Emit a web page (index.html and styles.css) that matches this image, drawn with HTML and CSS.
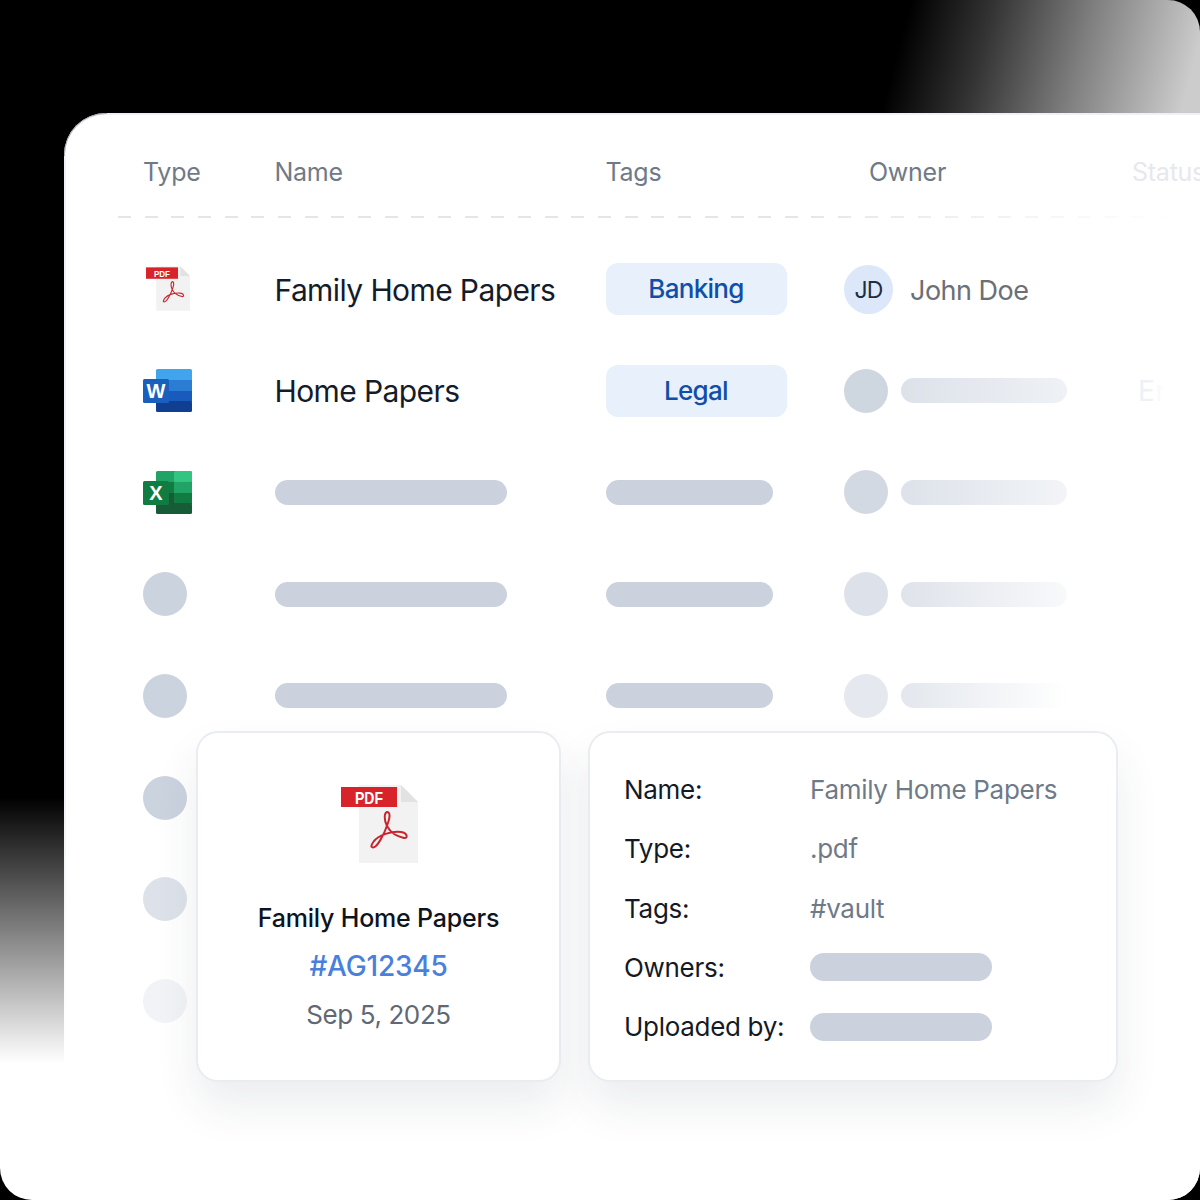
FILE: index.html
```html
<!DOCTYPE html>
<html lang="en">
<head>
<meta charset="utf-8">
<title>Documents</title>
<link rel="stylesheet" href="styles.css">
</head>
<body>
<main class="frame">
  <section class="panel">
    <div class="row head">
      <div>Type</div>
      <div>Name</div>
      <div>Tags</div>
      <div class="head-owner">Owner</div>
      <div class="head-status">Status</div>
    </div>
    <div class="dashes"></div>

    <div class="rows">
      <div class="row row-first">
        <div class="type">
          <svg class="icon-pdf-sm" viewBox="0 0 77 78">
            <path d="M18 0H60L77 17V78H18Z" fill="#f2f2f2"/>
            <path d="M60 0L77 17H60Z" fill="#e2e2e2"/>
            <rect x="0" y="2" width="56" height="20" fill="#d9232b"/>
            <text x="14" y="19" class="pdf-label" textLength="28" lengthAdjust="spacingAndGlyphs">PDF</text>
            <path d="M31 62C35 65 43 50 47 38C50 29 48 27 46 27C43 28 43 35 46 41C50 49 56 51 63 53C67 54 67 48 60 47C50 46 38 50 33 56C30 60 30 62 31 62Z" fill="none" stroke="#c9252d" stroke-width="2"/>
          </svg>
        </div>
        <div class="name">Family Home Papers</div>
        <div><span class="tag">Banking</span></div>
        <div class="owner">
          <span class="initials">JD</span>
          <span class="owner-name">John Doe</span>
        </div>
      </div>

      <div class="row">
        <div class="type">
          <svg class="icon-office" viewBox="0 0 49 43">
            <rect x="13" width="36" height="12" rx="1.5" fill="#41a5ee"/>
            <rect x="13" y="11" width="36" height="11" fill="#2b7cd3"/>
            <rect x="13" y="22" width="36" height="11" fill="#185abd"/>
            <rect x="13" y="32" width="36" height="11" rx="1.5" fill="#103f91"/>
            <rect y="10" width="26" height="24" rx="1.5" fill="#1a5fbe"/>
            <text x="13" y="29" class="office-label" text-anchor="middle">W</text>
          </svg>
        </div>
        <div class="name">Home Papers</div>
        <div><span class="tag">Legal</span></div>
        <div class="owner">
          <span class="dot dot-a"></span>
          <span class="line line-a"></span>
        </div>
        <div class="status">En</div>
      </div>

      <div class="row">
        <div class="type">
          <svg class="icon-office" viewBox="0 0 49 43">
            <rect x="13" width="36" height="12" rx="1.5" fill="#21a366"/>
            <rect x="31" width="18" height="11" rx="1.5" fill="#33c481"/>
            <rect x="13" y="11" width="18" height="11" fill="#107c41"/>
            <rect x="31" y="11" width="18" height="11" fill="#21a366"/>
            <rect x="13" y="22" width="18" height="11" fill="#185c37"/>
            <rect x="31" y="22" width="18" height="11" fill="#107c41"/>
            <rect x="13" y="32" width="36" height="11" rx="1.5" fill="#185c37"/>
            <rect y="10" width="26" height="24" rx="1.5" fill="#107c41"/>
            <text x="13" y="29" class="office-label" text-anchor="middle">X</text>
          </svg>
        </div>
        <div><span class="bar bar-name"></span></div>
        <div><span class="bar bar-tag"></span></div>
        <div class="owner">
          <span class="dot dot-b"></span>
          <span class="line line-b"></span>
        </div>
      </div>

      <div class="row">
        <div class="type"><span class="dot"></span></div>
        <div><span class="bar bar-name"></span></div>
        <div><span class="bar bar-tag"></span></div>
        <div class="owner">
          <span class="dot dot-c"></span>
          <span class="line line-c"></span>
        </div>
      </div>

      <div class="row">
        <div class="type"><span class="dot"></span></div>
        <div><span class="bar bar-name"></span></div>
        <div><span class="bar bar-tag"></span></div>
        <div class="owner">
          <span class="dot dot-d"></span>
          <span class="line line-d"></span>
        </div>
      </div>

      <div class="row"><div class="type"><span class="dot"></span></div></div>
      <div class="row"><div class="type"><span class="dot dot-c"></span></div></div>
      <div class="row"><div class="type"><span class="dot dot-e"></span></div></div>
    </div>

    <div class="cards">
      <article class="card card-file">
        <svg class="icon-pdf-lg" viewBox="0 0 77 78">
          <path d="M18 0H60L77 17V78H18Z" fill="#f2f2f2"/>
          <path d="M60 0L77 17H60Z" fill="#e2e2e2"/>
          <rect x="0" y="2" width="56" height="20" fill="#d9232b"/>
          <text x="14" y="19" class="pdf-label" textLength="28" lengthAdjust="spacingAndGlyphs">PDF</text>
          <path d="M31 62C35 65 43 50 47 38C50 29 48 27 46 27C43 28 43 35 46 41C50 49 56 51 63 53C67 54 67 48 60 47C50 46 38 50 33 56C30 60 30 62 31 62Z" fill="none" stroke="#c9252d" stroke-width="2"/>
        </svg>
        <h2 class="file-name">Family Home Papers</h2>
        <p class="file-id">#AG12345</p>
        <p class="file-date">Sep 5, 2025</p>
      </article>
      <article class="card card-meta">
        <div class="meta-label">Name:</div><div class="meta-value">Family Home Papers</div>
        <div class="meta-label">Type:</div><div class="meta-value">.pdf</div>
        <div class="meta-label">Tags:</div><div class="meta-value">#vault</div>
        <div class="meta-label">Owners:</div><div class="meta-bar"></div>
        <div class="meta-label">Uploaded by:</div><div class="meta-bar"></div>
      </article>
    </div>
  </section>
</main>
</body>
</html>
```

FILE: styles.css
```css
* { box-sizing: border-box; }

html, body {
  margin: 0;
  height: 100%;
  background: #000;
}

body {
  font-family: "Inter", "Liberation Sans", sans-serif;
  overflow: hidden;
}

.pdf-label {
  font: 700 17px "Liberation Sans", sans-serif;
  fill: #fff;
}

.office-label {
  font: 700 20px "Liberation Sans", sans-serif;
  fill: #fff;
}

.frame {
  width: 1200px;
  height: 1200px;
  border-radius: 32px;
  overflow: hidden;
  padding: 113px 0 0 64px;
  background:
    linear-gradient(105deg, rgba(255,255,255,0) 880px, rgba(255,255,255,.2) 960px, rgba(255,255,255,.5) 1060px, rgba(255,255,255,.8) 1170px),
    linear-gradient(180deg, #000 797px, #fff 1063px);
}

.panel {
  position: relative;
  height: 100%;
  background: #fff;
  border-top-left-radius: 42px;
  border-top: 2px solid #eef1f6;
  border-left: 2px solid transparent;
  padding: 0 0 0 77px;
}

.panel::before {
  content: "";
  position: absolute;
  left: -2px;
  top: 40px;
  bottom: 0;
  width: 2px;
  background: linear-gradient(180deg, #eef2f8, #eef2f8 60%, #fff 85%);
}

.panel::after {
  content: "";
  position: absolute;
  left: -2px;
  top: -2px;
  width: 42px;
  height: 42px;
  border-top: 1.5px solid #a9adb3;
  border-left: 1.5px solid #a9adb3;
  border-top-left-radius: 42px;
}

.row {
  display: grid;
  grid-template-columns: 131.5px 331px 238.5px 288px 100px;
  align-items: center;
  height: 101.75px;
}

.head {
  height: 101px;
  font-size: 25px;
  letter-spacing: -.25px;
  color: #6f7a89;
  align-items: start;
  padding-top: 41px;
  line-height: 32px;
}

.head-owner { padding-left: 25px; }
.head-status { color: #e6e8ec; }

.dashes {
  height: 2px;
  margin-left: -25px;
  margin-right: 20px;
  background: repeating-linear-gradient(90deg, #e3e6eb 0 13px, transparent 13px 26.67px);
  -webkit-mask-image: linear-gradient(90deg, #000 65%, transparent 100%);
  mask-image: linear-gradient(90deg, #000 65%, transparent 100%);
}

.rows { padding-top: 20px; }

.type { display: flex; align-items: center; }

.icon-pdf-sm { width: 44px; height: 45px; margin-left: 3px; }
.icon-office { width: 49px; height: 43px; }
.icon-pdf-lg { width: 77px; height: 78px; margin-left: 1px; }

.name {
  font-size: 30px;
  letter-spacing: -.6px;
  color: #141c2b;
}

.row-first .name { padding-top: 2px; }
.row-first .owner { padding-top: 2px; }
.row-first .owner-name { padding-top: 2px; }

.tag {
  display: flex;
  align-items: center;
  justify-content: center;
  width: 181px;
  height: 52px;
  border-radius: 12px;
  background: #e8f0fc;
  color: #0f4fa8;
  font-size: 26px;
  letter-spacing: -.7px;
  font-weight: 500;
}

.owner {
  display: flex;
  align-items: center;
  gap: 13px;
}

.initials {
  display: flex;
  align-items: center;
  justify-content: center;
  width: 49px;
  height: 49px;
  border-radius: 50%;
  background: #dce8f9;
  color: #1f2d44;
  font-size: 23px;
  letter-spacing: -.8px;
}

.owner-name {
  margin-left: 4px;
  font-size: 27px;
  letter-spacing: -.5px;
  color: #6b6f76;
}

.status {
  padding-left: 6px;
  font-size: 29px;
  color: #eef0f3;
  -webkit-mask-image: linear-gradient(90deg, #000 16px, transparent 34px);
  mask-image: linear-gradient(90deg, #000 16px, transparent 34px);
}

.dot {
  display: block;
  flex: none;
  width: 44px;
  height: 44px;
  border-radius: 50%;
  background: #cbd3df;
}

.dot-a { background: #ced6e0; }
.dot-b { background: #d3d9e3; }
.dot-c { background: #dde2ea; }
.dot-d { background: #e5e8ee; }
.dot-e { background: #f1f3f6; }

.bar {
  display: block;
  height: 25px;
  border-radius: 13px;
  background: #cbd2de;
}

.bar-name { width: 232px; }
.bar-tag { width: 167px; }

.line {
  display: block;
  width: 166px;
  height: 25px;
  border-radius: 13px;
}

.line-a { background: linear-gradient(90deg, #dde2ea, #eef1f5); }
.line-b { background: linear-gradient(90deg, #dde2ea, #f2f4f7); }
.line-c { background: linear-gradient(90deg, #dfe3ea, #f8f9fb); }
.line-d { background: linear-gradient(90deg, #e3e7ed, #fff); }

.cards {
  position: absolute;
  left: 130px;
  top: 616px;
  display: flex;
  gap: 27px;
}

.card {
  height: 351px;
  background: #fff;
  border: 2px solid #e9ecf1;
  border-radius: 22px;
  box-shadow: 0 24px 44px rgba(40, 55, 80, .09);
}

.card-file {
  width: 365px;
  display: flex;
  flex-direction: column;
  align-items: center;
  padding-top: 52px;
}

.file-name {
  margin: 39px 0 0;
  font-size: 25px;
  letter-spacing: -.2px;
  line-height: 32px;
  font-weight: 500;
  color: #0d1420;
}

.file-id {
  margin: 15px 0 0;
  font-size: 28px;
  letter-spacing: -.2px;
  line-height: 34px;
  font-weight: 500;
  color: #4a7fdc;
}

.file-date {
  margin: 16px 0 0;
  font-size: 26px;
  letter-spacing: -.4px;
  line-height: 32px;
  color: #5f6875;
}

.card-meta {
  width: 530px;
  display: grid;
  grid-template-columns: 186px 182px;
  grid-auto-rows: 59.25px;
  align-items: center;
  padding: 27px 0 0 34px;
  font-size: 26px;
  letter-spacing: -.3px;
}

.meta-label { color: #131a27; }
.meta-value { color: #6f7a89; white-space: nowrap; }

.meta-bar {
  height: 28px;
  border-radius: 14px;
  background: #cbd2de;
}
```
